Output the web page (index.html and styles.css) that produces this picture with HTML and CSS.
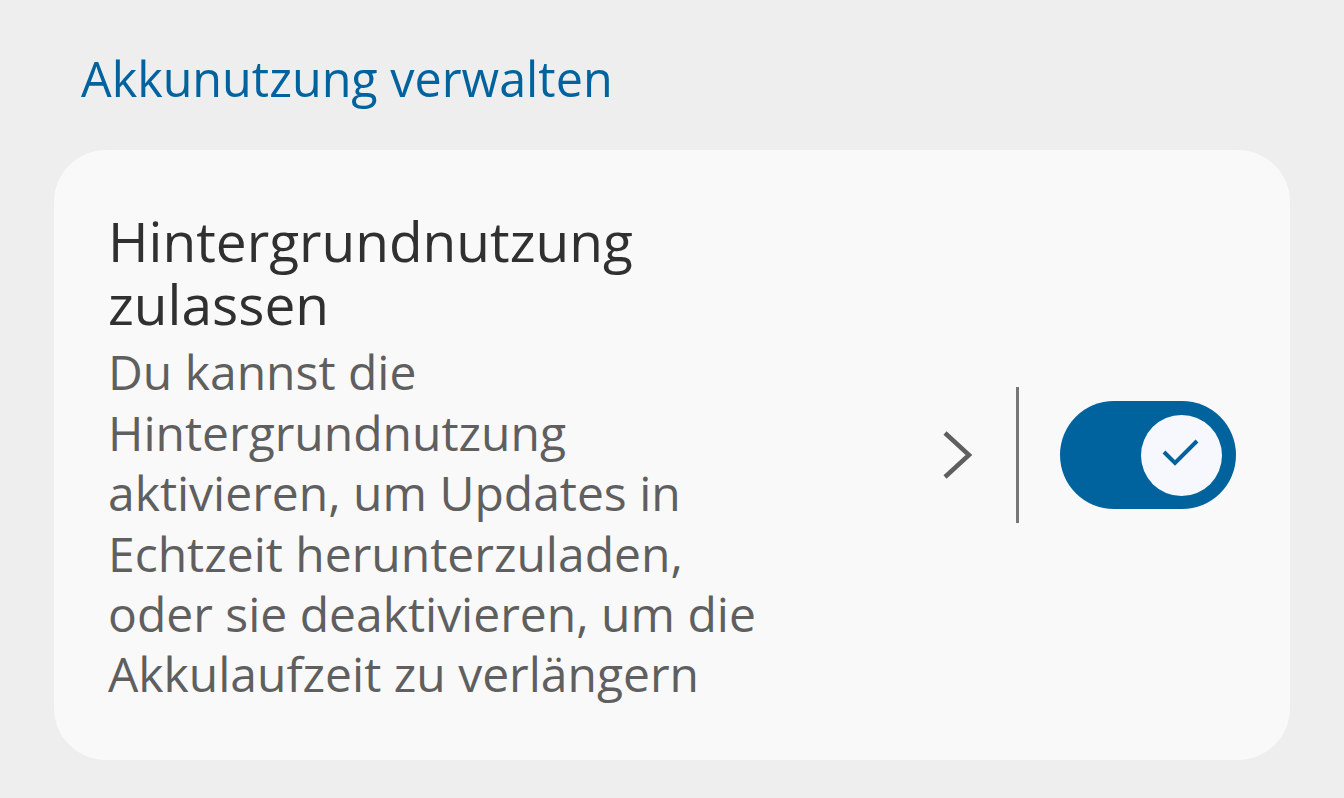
FILE: index.html
```html
<!DOCTYPE html>
<html lang="de">
<head>
  <meta charset="UTF-8">
  <title>Akkunutzung verwalten</title>
  <link rel="stylesheet" href="styles.css">
</head>
<body>
  <h1 class="abschnitt">Akkunutzung verwalten</h1>

  <div class="karte">
    <div class="texte">
      <h2 class="titel">Hintergrundnutzung zulassen</h2>
      <p class="beschreibung">Du kannst die Hintergrundnutzung aktivieren, um Updates in Echtzeit herunterzuladen, oder sie deaktivieren, um die Akkulaufzeit zu verlängern</p>
    </div>

    <div class="steuerung">
      <!-- Pfeil zu den Details -->
      <svg class="pfeil" width="34" height="50" viewBox="0 0 34 50">
        <polyline points="4,3 28,25 4,47" fill="none" stroke="#5f5f5f" stroke-width="4.5"/>
      </svg>
      <div class="trenner"></div>
      <div class="schalter">
        <div class="knopf">
          <svg width="44" height="34" viewBox="0 0 44 34">
            <polyline points="4,14 15,25 37,3" fill="none" stroke="#00639e" stroke-width="4"/>
          </svg>
        </div>
      </div>
    </div>
  </div>
</body>
</html>
```

FILE: styles.css
```css
body {
  margin: 0;
  background-color: #eeeeee;
  font-family: "Open Sans", Roboto, sans-serif;
  padding: 0 54px;
}

.abschnitt {
  margin: 0;
  padding: 48px 0 0 27px;
  height: 150px;
  box-sizing: border-box;
  font-size: 48.5px;
  font-weight: 400;
  line-height: 60px;
  color: #00639e;
}

.karte {
  display: flex;
  align-items: center;
  background-color: #f9f9f9;
  border-radius: 52px;
  height: 610px;
  box-sizing: border-box;
  padding: 4px 54px 0 54px;
}

.texte {
  width: 680px;
}

.titel {
  margin: 0;
  font-size: 55px;
  font-weight: 400;
  line-height: 63px;
  color: #303030;
}

.beschreibung {
  margin: 7px 0 0 0;
  font-size: 48px;
  line-height: 60.4px;
  color: #5f5f5f;
}

.steuerung {
  margin-left: auto;
  margin-top: -4px;
  display: flex;
  align-items: center;
}

.pfeil {
  display: block;
}

.trenner {
  width: 3px;
  height: 136px;
  background-color: #777777;
  margin: 0 41px 0 41px;
}

.schalter {
  width: 176px;
  height: 108px;
  border-radius: 54px;
  background-color: #00639e;
  display: flex;
  align-items: center;
  justify-content: flex-end;
  padding-right: 14px;
  box-sizing: border-box;
}

.knopf {
  width: 81px;
  height: 81px;
  border-radius: 50%;
  background-color: #f6f8fd;
  display: flex;
  align-items: center;
  justify-content: center;
}

.knopf svg {
  display: block;
}
```
